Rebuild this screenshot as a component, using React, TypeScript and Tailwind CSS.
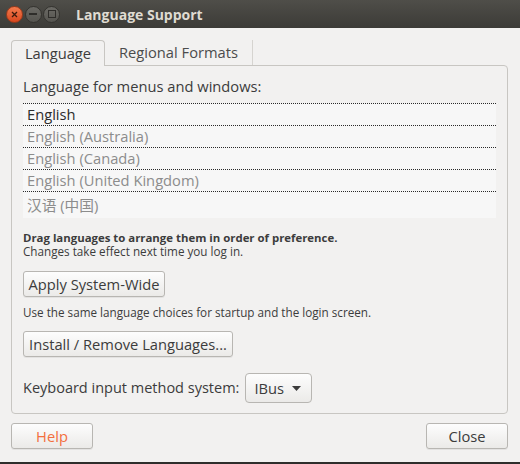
import React from "react";

const languages = [
    { name: "English", active: true },
    { name: "English (Australia)", active: false },
    { name: "English (Canada)", active: false },
    { name: "English (United Kingdom)", active: false },
    { name: "汉语 (中国)", active: false },
];

function WindowButton({ kind }: { kind: "close" | "min" | "max" }) {
    const bg = kind === "close"
        ? "bg-gradient-to-b from-[#f37a4c] to-[#d9461c] border-[#9c3a1b]"
        : "bg-gradient-to-b from-[#6b6a65] to-[#55544f] border-[#34332f]";
    return (
        <div className={`w-[17px] h-[17px] rounded-full border flex items-center justify-center ${bg}`}>
            {kind === "close" && (
                <svg width="7" height="7" viewBox="0 0 7 7">
                    <path d="M1 1L6 6M6 1L1 6" stroke="#3c1a0c" strokeWidth="1.3" />
                </svg>
            )}
            {kind === "min" && <div className="w-[8px] h-[1.5px] bg-[#2e2d2a]" />}
            {kind === "max" && <div className="w-[8px] h-[8px] border-[1.5px] border-[#2e2d2a]" />}
        </div>
    );
}

function Button({ children, className = "" }: { children: React.ReactNode; className?: string }) {
    return (
        <button className={`h-[26px] rounded-[3px] border border-[#b8b6b2] bg-gradient-to-b from-[#fdfdfd] to-[#ebeae8] shadow-[0_1px_0_rgba(0,0,0,0.06)] text-[14.7px] leading-none ${className}`}>
            {children}
        </button>
    );
}

export default function App() {
    return (
        <div className="w-[520px] h-[464px] bg-[#2e2d2b] flex flex-col text-[#3c3c3c]" style={{ fontFamily: '"Open Sans", "Noto Sans CJK SC", sans-serif' }}>
            <div className="h-[462px] flex flex-col bg-[#f2f1f0]">
                {/* title bar */}
                <div className="h-[28px] bg-gradient-to-b from-[#4f4e49] to-[#3c3b37] flex items-center pl-[6px]">
                    <div className="flex items-center gap-[1.5px]">
                        <WindowButton kind="close" />
                        <WindowButton kind="min" />
                        <WindowButton kind="max" />
                    </div>
                    <span className="ml-[16px] text-[14px] font-bold text-[#dfdbd2]">Language Support</span>
                </div>

                <div className="flex-1 flex flex-col pl-[11px] pr-[12px]">
                    {/* tabs */}
                    <div className="flex mt-[12px] h-[25px] items-stretch">
                        <div className="relative z-10 w-[94px] -mb-px border border-b-0 border-[#c8c6c2] rounded-t-[4px] bg-[#f2f1f0] flex items-center justify-center text-[14.7px] text-[#3c3c3c]">
                            Language
                        </div>
                        <div className="w-[148px] border-r border-[#d6d4d0] flex items-center justify-center text-[14.7px] text-[#4c4c4c]">
                            Regional Formats
                        </div>
                    </div>

                    {/* notebook page */}
                    <div className="h-[349px] border border-[#c8c6c2] rounded-b-[4px] rounded-tr-[4px] pl-[11px] pr-[11px] flex flex-col">
                        <div className="mt-[10px] h-[20px] leading-[20px] text-[14.7px]">Language for menus and windows:</div>
                        <div className="mt-[7px] bg-[#f7f7f7] flex flex-col">
                            {languages.map((lang, i) => (
                                <div
                                    key={lang.name}
                                    className={`border-t border-dotted border-[#2a2a2a] pl-[4px] text-[14.7px] flex items-center ${i === languages.length - 1 ? "h-[27px]" : "h-[22px]"} ${lang.active ? "text-[#2c2c2c]" : "text-[#8c8c8c]"}`}
                                >
                                    {lang.name}
                                </div>
                            ))}
                        </div>
                        <div className="mt-[13px] text-[11.4px] leading-[14px] font-bold">Drag languages to arrange them in order of preference.</div>
                        <div className="text-[11.7px] leading-[13px]">Changes take effect next time you log in.</div>
                        <Button className="mt-[13px] w-[142px] h-[25px]">Apply System-Wide</Button>
                        <div className="mt-[8px] text-[11.7px] leading-[14px]">Use the same language choices for startup and the login screen.</div>
                        <Button className="mt-[12px] w-[210px] h-[25px]">Install / Remove Languages...</Button>
                        <div className="mt-[16px] flex items-center">
                            <span className="text-[14.5px]">Keyboard input method system:</span>
                            <div className="ml-[6px] w-[67px] h-[30px] rounded-[4px] border border-[#b8b6b2] bg-gradient-to-b from-[#fdfdfd] to-[#ebeae8] flex items-center pl-[8px] pr-[10px] justify-between">
                                <span className="text-[14.7px]">IBus</span>
                                <svg width="9" height="5" viewBox="0 0 9 5">
                                    <path d="M0 0H9L4.5 5Z" fill="#3c3c3c" />
                                </svg>
                            </div>
                        </div>
                    </div>

                    {/* action buttons */}
                    <div className="mt-[9px] flex justify-between">
                        <Button className="w-[82px] text-[#f36f3e]">Help</Button>
                        <Button className="w-[82px]">Close</Button>
                    </div>
                </div>
            </div>
        </div>
    );
}
